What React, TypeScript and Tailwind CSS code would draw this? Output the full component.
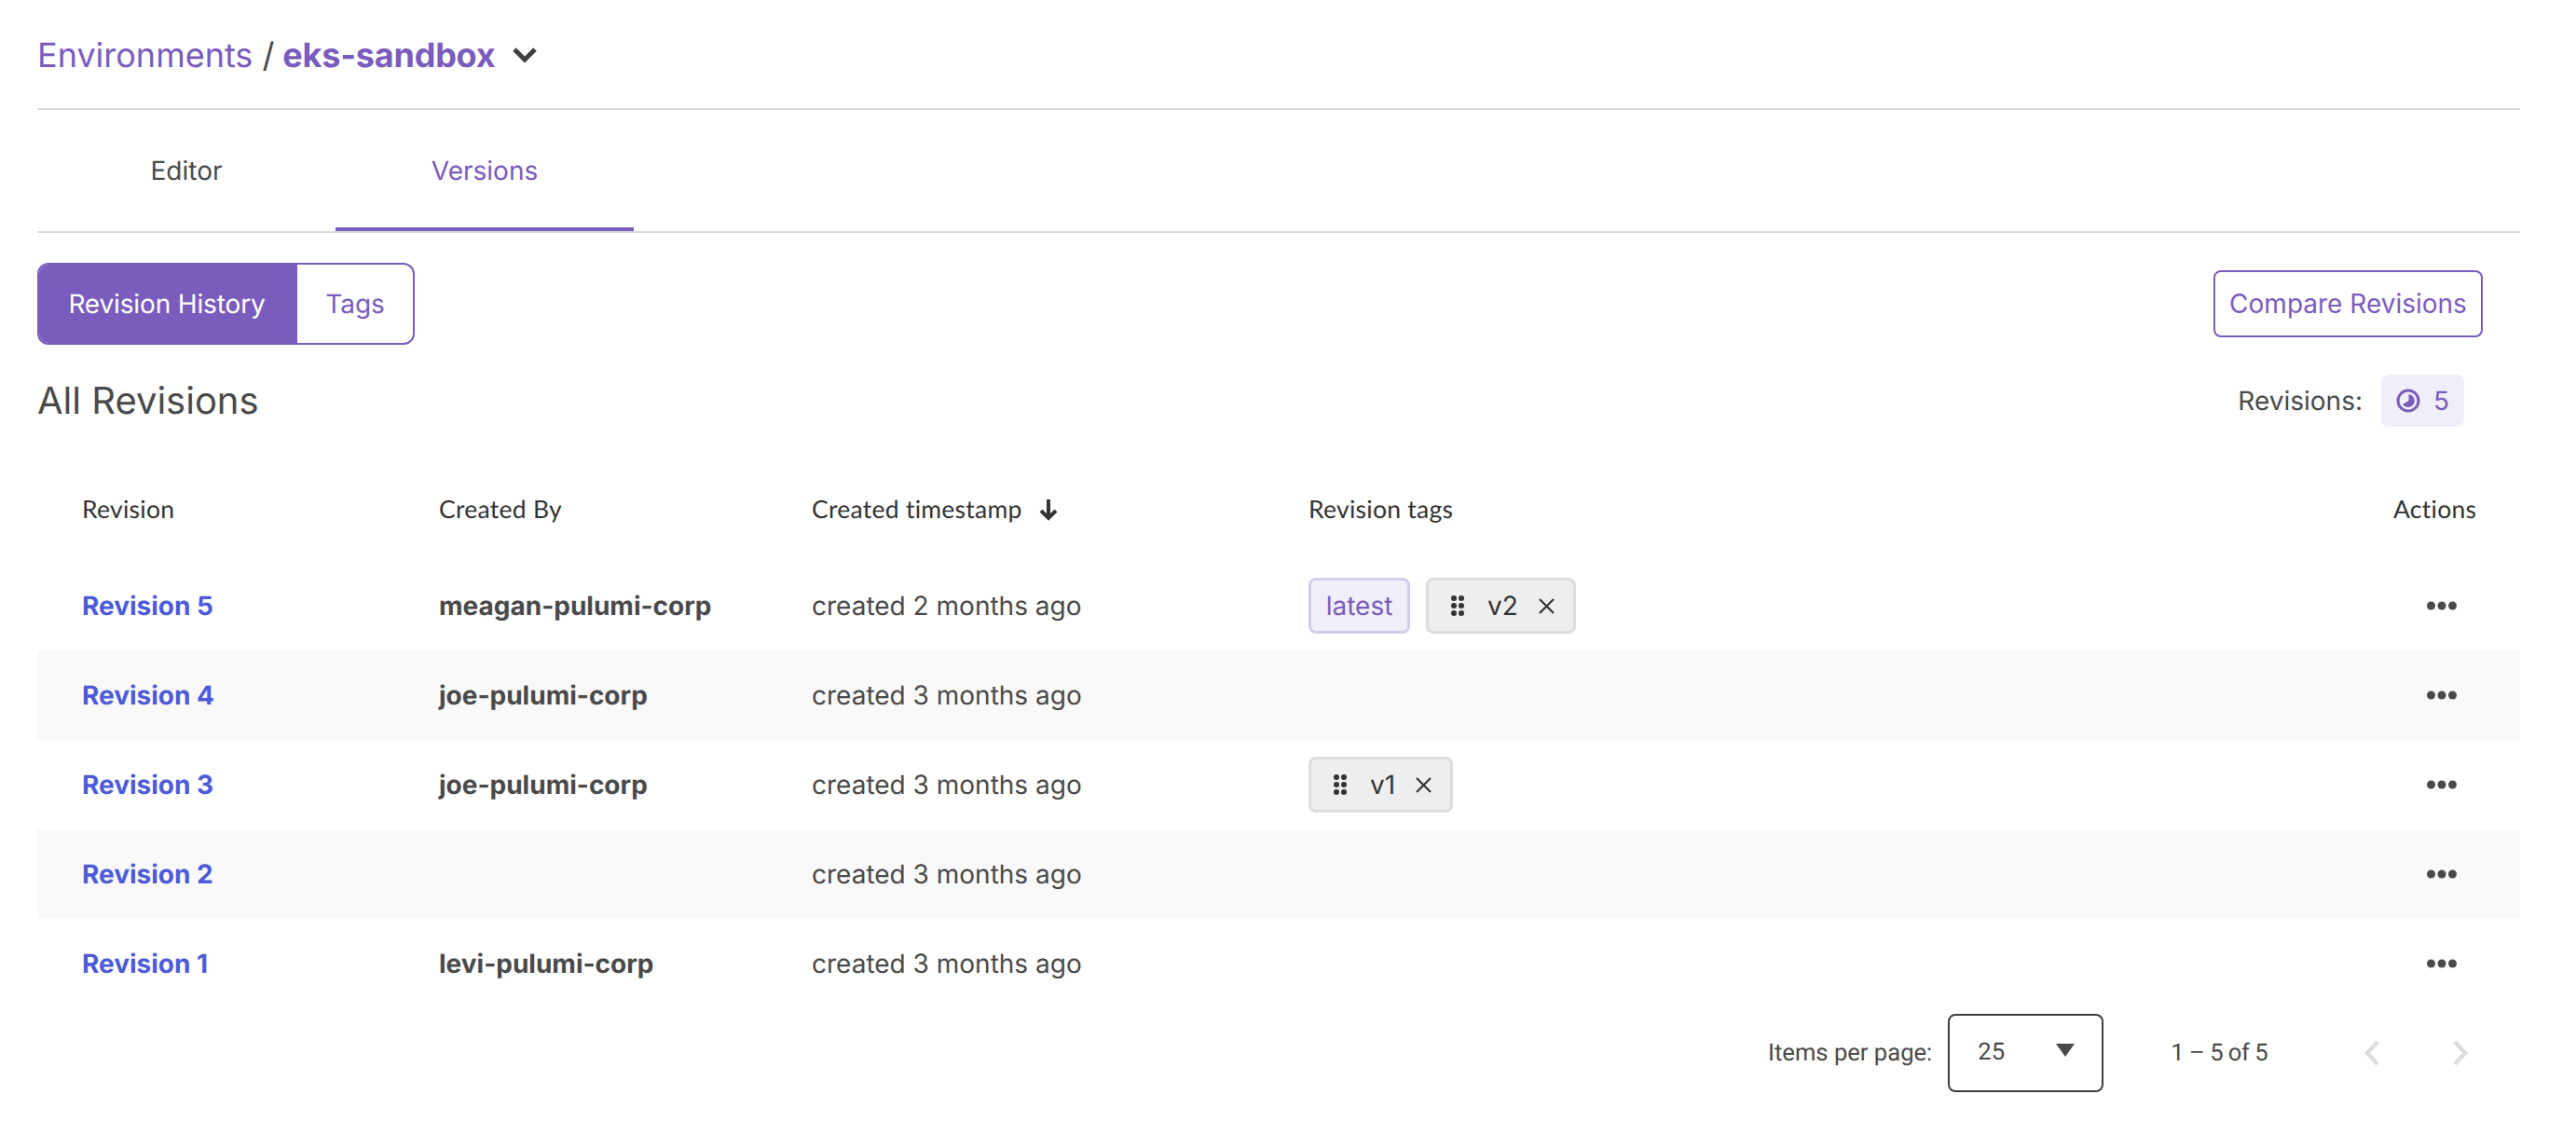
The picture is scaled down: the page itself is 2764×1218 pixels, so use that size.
import React from "react";

const Grip = () => (
  <svg width="14" height="22" viewBox="0 0 14 22" className="fill-[#333333] shrink-0">
    {[3, 11, 19].map((y) => (
      <g key={y}>
        <circle cx="3" cy={y} r="3" />
        <circle cx="11" cy={y} r="3" />
      </g>
    ))}
  </svg>
);

const Close = () => (
  <svg width="17" height="17" viewBox="0 0 17 17" className="ml-[22px] stroke-[#333333] shrink-0" strokeWidth="2.2" fill="none">
    <path d="M1 1 16 16M16 1 1 16" />
  </svg>
);

const Dots = () => (
  <svg width="32" height="10" viewBox="0 0 32 10" className="fill-[#4a4a4a]">
    <circle cx="4.5" cy="5" r="4.5" />
    <circle cx="16" cy="5" r="4.5" />
    <circle cx="27.5" cy="5" r="4.5" />
  </svg>
);

const Chip = ({ label }: { label: string }) => (
  <div className="flex h-[60px] items-center rounded-lg border-[3px] border-[#dddddd] bg-[#eeeeee] pl-[24px] pr-[20px] text-[28px] text-[#333333]">
    <Grip />
    <span className="ml-[25px]">{label}</span>
    <Close />
  </div>
);

const rows = [
  { name: "Revision 5", by: "meagan-pulumi-corp", when: "created 2 months ago", tags: ["latest", "v2"] },
  { name: "Revision 4", by: "joe-pulumi-corp", when: "created 3 months ago", tags: [] },
  { name: "Revision 3", by: "joe-pulumi-corp", when: "created 3 months ago", tags: ["v1"] },
  { name: "Revision 2", by: "", when: "created 3 months ago", tags: [] },
  { name: "Revision 1", by: "levi-pulumi-corp", when: "created 3 months ago", tags: [] },
];

const grid = "grid grid-cols-[383px_400px_533px_1fr_87px] items-center pl-12 pr-[49px]";

export default function App() {
  return (
    <div className="min-h-[1218px] w-[2764px] bg-white pl-10 pr-[60px] font-['Inter',sans-serif] text-[#4a4a4a] antialiased [text-rendering:geometricPrecision]">
      <div className="flex h-[118px] items-center border-b-2 border-[#dcdcdc] pt-[2px]">
        <span className="text-[36px] text-[#7a5cbc]">Environments</span>
        <span className="ml-[10px] text-[36px] text-[#4a4a4a]">/</span>
        <span className="ml-[9px] text-[36px] font-bold tracking-[-0.006em] text-[#7a5cbc]">eks-sandbox</span>
        <svg width="28" height="18" viewBox="0 0 28 18" className="ml-[18px] stroke-[#3f3f3f]" fill="none" strokeWidth="5">
          <path d="M3 3 14 14 25 3" />
        </svg>
      </div>

      <div className="flex h-[132px] border-b-2 border-[#dcdcdc]">
        <div className="flex h-[130px] w-[320px] items-center justify-center text-[28px] text-[#4a4a4a]">Editor</div>
        <div className="flex h-[130px] w-[320px] items-center justify-center border-b-4 border-[#7a5cbc] pt-[4px] text-[28px] text-[#7a5cbc]">Versions</div>
      </div>

      <div className="mt-8 flex h-[88px] items-center justify-between pr-10">
        <div className="flex h-[88px] overflow-hidden rounded-xl border-2 border-[#7a5cbc] text-[28px]">
          <div className="flex w-[277px] items-center justify-center bg-[#7a5cbc] pr-[3px] tracking-[-0.005em] text-white">Revision History</div>
          <div className="flex w-[124px] items-center justify-center text-[#7a5cbc]">Tags</div>
        </div>
        <button className="flex h-[72px] w-[289px] items-center justify-center rounded-lg border-2 border-[#7a5cbc] text-[28px] text-[#7a5cbc]">
          Compare Revisions
        </button>
      </div>

      <div className="mt-8 flex h-14 items-center justify-between pr-[60px]">
        <h2 className="text-[40px] text-[#4a4a4a]">All Revisions</h2>
        <div className="flex items-center gap-5">
          <span className="text-[28px] text-[#4a4a4a]">Revisions:</span>
          <div className="flex h-14 w-[89px] items-center justify-center gap-[14px] rounded-lg bg-[#f0eef8] text-[28px] text-[#7a5cbc]">
            <svg width="26" height="26" viewBox="0 0 26 26" fill="none" className="stroke-[#7a5cbc]">
              <circle cx="13" cy="13" r="11" strokeWidth="3" />
              <path d="M13.5 6a7 7 0 1 1-6.5 11L13.5 13Z" className="fill-[#7a5cbc]" strokeWidth="0" />
            </svg>
            <span>5</span>
          </div>
        </div>
      </div>

      <div className={`${grid} mt-[34px] h-[110px] font-['Lato',sans-serif] text-[26.5px] tracking-[0.01em] text-[#333333]`}>
        <div>Revision</div>
        <div>Created By</div>
        <div className="flex items-center gap-[18px]">
          <span>Created timestamp</span>
          <svg width="20" height="24" viewBox="0 0 20 24" fill="none" className="stroke-[#333333]" strokeWidth="4">
            <path d="M10 1v21M2 13l8 8 8-8" />
          </svg>
        </div>
        <div>Revision tags</div>
        <div className="text-right">Actions</div>
      </div>

      {rows.map((r, i) => (
        <div key={r.name} className={`${grid} h-24 text-[28px] ${i % 2 === 1 ? "bg-[#f9f9f9]" : "bg-white"}`}>
          <a className="font-bold text-[#4d5bd8]">{r.name}</a>
          <div className="font-bold text-[#4a4a4a]">{r.by}</div>
          <div className="text-[#4a4a4a]">{r.when}</div>
          <div className="flex items-center gap-[17px]">
            {r.tags.map((t) =>
              t === "latest" ? (
                <div key={t} className="flex h-[60px] w-[109px] items-center justify-center rounded-lg border-[3px] border-[#d6cbed] bg-[#f0eef9] text-[28px] text-[#7a5cbc]">
                  latest
                </div>
              ) : (
                <Chip key={t} label={t} />
              )
            )}
          </div>
          <div className="flex justify-end pr-[19px]">
            <Dots />
          </div>
        </div>
      ))}

      <div className="mt-[6px] flex h-[84px] items-center font-['Roboto',sans-serif] text-[25.6px] text-[#4a4a4a]">
        <span className="ml-[1857px]">Items per page:</span>
        <div className="ml-[17px] flex h-[84px] w-[167px] items-start rounded-lg border-2 border-[#3f3f3f] pl-[30px] pr-[29px] pt-[20px]">
          <span>25</span>
          <svg width="20" height="14" viewBox="0 0 20 14" className="ml-auto mt-[10px] fill-[#4a4a4a]">
            <path d="M0 0h20L10 14Z" />
          </svg>
        </div>
        <span className="ml-[72px] tracking-[-0.02em]">1 – 5 of 5</span>
        <svg width="20" height="28" viewBox="0 0 20 28" fill="none" className="ml-[102px] stroke-[#dddddd]" strokeWidth="4.5">
          <path d="M16 2 5 14l11 12" />
        </svg>
        <svg width="20" height="28" viewBox="0 0 20 28" fill="none" className="ml-[75px] stroke-[#dddddd]" strokeWidth="4.5">
          <path d="M4 2l11 12L4 26" />
        </svg>
      </div>
    </div>
  );
}
